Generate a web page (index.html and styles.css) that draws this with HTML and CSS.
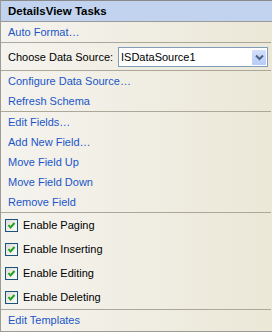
FILE: index.html
```html
<!DOCTYPE html>
<html>
<head>
<meta charset="utf-8">
<link rel="stylesheet" href="styles.css">
</head>
<body>
<div class="panel">
  <div class="header">DetailsView Tasks</div>
  <div class="section">
    <a class="link">Auto Format…</a>
  </div>
  <div class="sep"></div>
  <div class="choose">
    <span class="label">Choose Data Source:</span>
    <div class="select">
      <span class="value">ISDataSource1</span>
      <span class="btn">
        <svg width="9" height="7" viewBox="0 0 9 7"><path d="M1 1.5 L4.5 5 L8 1.5" fill="none" stroke="#4d6185" stroke-width="2"/></svg>
      </span>
    </div>
  </div>
  <div class="sep"></div>
  <div class="section">
    <a class="link">Configure Data Source…</a>
    <a class="link">Refresh Schema</a>
  </div>
  <div class="sep"></div>
  <div class="section">
    <a class="link">Edit Fields…</a>
    <a class="link">Add New Field…</a>
    <a class="link">Move Field Up</a>
    <a class="link">Move Field Down</a>
    <a class="link">Remove Field</a>
  </div>
  <div class="sep"></div>
  <div class="section">
    <label class="check"><span class="box"><svg width="11" height="11" viewBox="0 0 11 11"><path d="M2.5 5 L4.5 7.5 L8.5 3" fill="none" stroke="#21a121" stroke-width="2"/></svg></span>Enable Paging</label>
    <label class="check"><span class="box"><svg width="11" height="11" viewBox="0 0 11 11"><path d="M2.5 5 L4.5 7.5 L8.5 3" fill="none" stroke="#21a121" stroke-width="2"/></svg></span>Enable Inserting</label>
    <label class="check"><span class="box"><svg width="11" height="11" viewBox="0 0 11 11"><path d="M2.5 5 L4.5 7.5 L8.5 3" fill="none" stroke="#21a121" stroke-width="2"/></svg></span>Enable Editing</label>
    <label class="check"><span class="box"><svg width="11" height="11" viewBox="0 0 11 11"><path d="M2.5 5 L4.5 7.5 L8.5 3" fill="none" stroke="#21a121" stroke-width="2"/></svg></span>Enable Deleting</label>
  </div>
  <div class="sep"></div>
  <div class="section">
    <a class="link">Edit Templates</a>
  </div>
</div>
</body>
</html>
```
FILE: styles.css
```css
html, body {
  margin: 0;
  padding: 0;
}
body {
  font-family: "Liberation Sans", Arial, sans-serif;
  font-size: 11px;
  color: #000;
}
.panel {
  width: 271px;
  height: 331px;
  border-left: 1px solid #9d9b93;
  border-bottom: 1px solid #9d9b93;
  background: linear-gradient(to right, #f5f3ee, #ebe8d8);
  display: flex;
  flex-direction: column;
  overflow: hidden;
}
.header {
  height: 20px;
  line-height: 20px;
  border-top: 1px solid #8a8a8a;
  border-bottom: 1px solid #9a9a9a;
  background: #c1d3ee;
  padding-left: 7px;
  font-weight: bold;
  font-size: 11.5px;
}
.section {
  display: flex;
  flex-direction: column;
}
.link {
  display: block;
  height: 20px;
  line-height: 20px;
  padding-left: 7px;
  color: #1a56c8;
}
.sep {
  height: 1px;
  background: #aca899;
  margin-right: 1px;
}
.choose {
  height: 27px;
  display: flex;
  align-items: center;
  padding-left: 7px;
  padding-right: 4px;
}
.label {
  flex: 1;
}
.select {
  width: 148px;
  height: 18px;
  border: 1px solid #7f9db9;
  background: #fff;
  display: flex;
  align-items: center;
  margin-top: 1px;
}
.value {
  flex: 1;
  padding-left: 2px;
}
.btn {
  width: 14px;
  height: 15px;
  margin-right: 1px;
  background: linear-gradient(to bottom, #d4e0fb, #b6cbf7);
  border-radius: 1px;
  display: flex;
  align-items: center;
  justify-content: center;
}
.check {
  height: 24px;
  display: flex;
  align-items: center;
  padding-left: 4px;
}
.box {
  width: 11px;
  height: 11px;
  border: 1px solid #1c5180;
  background: linear-gradient(135deg, #dcdcd5, #ffffff);
  margin-right: 5px;
  display: flex;
}
```
